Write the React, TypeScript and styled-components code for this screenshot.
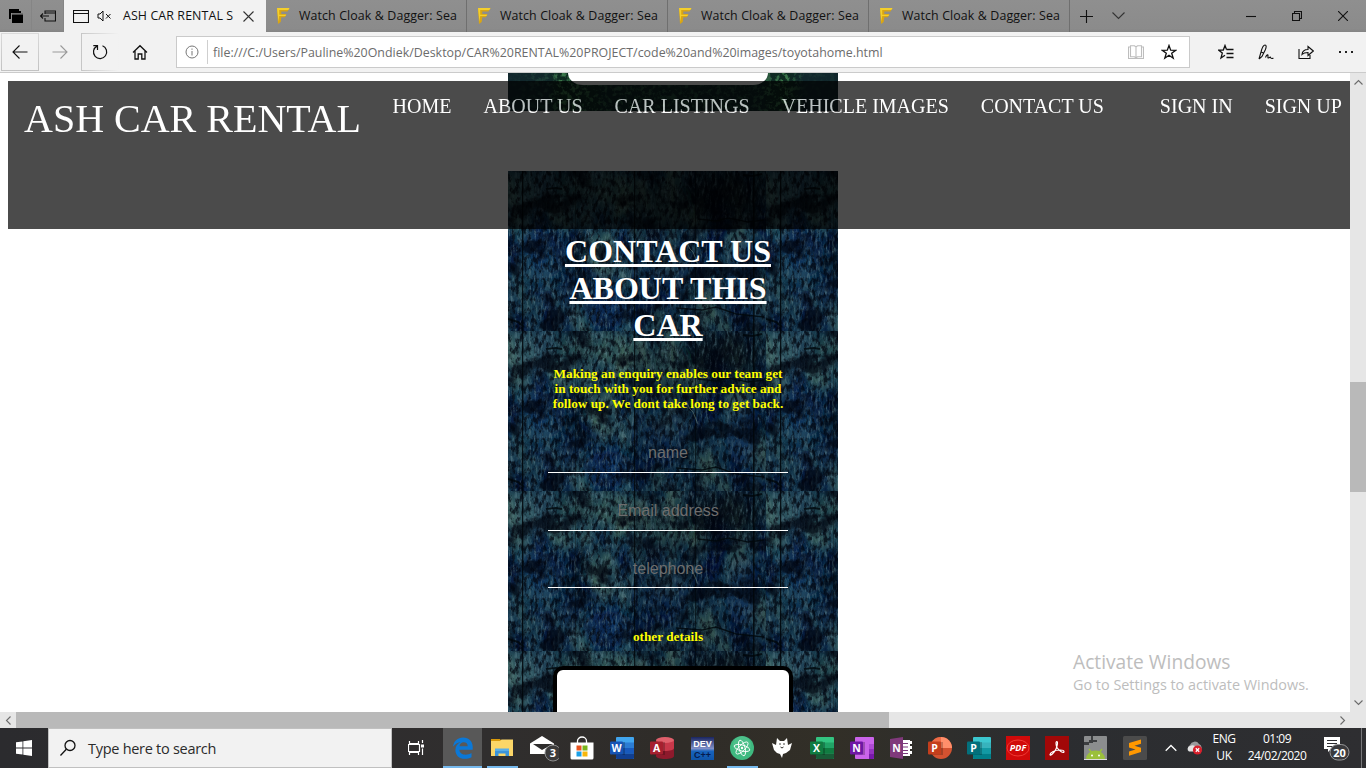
import React from 'react';
import styled, { createGlobalStyle } from 'styled-components';

const GlobalStyle = createGlobalStyle`
  * { box-sizing: border-box; }
  body { margin: 0; background: #fff; overflow: hidden; }
  #root { height: 100vh; }
`;

const uiFont = `"Open Sans", "Noto Sans", sans-serif`;
const serif = `"Liberation Serif", "Times New Roman", serif`;

const Screen = styled.div`
  display: flex;
  flex-direction: column;
  width: 1366px;
  height: 768px;
  overflow: hidden;
  background: #fff;
  font-family: ${uiFont};
`;

/* ---------- browser frame ---------- */

const TabStrip = styled.div`
  display: flex;
  height: 32px;
  flex: none;
  background: linear-gradient(#8f8f8f, #8b8b8b 90%, #848484);
`;

const TabTools = styled.div`
  display: flex;
  width: 64px;
`;

const TabTool = styled.div`
  display: flex;
  align-items: center;
  justify-content: center;
  width: 32px;
  border-right: 1px solid #858585;
`;

const Tab = styled.div<{ $active?: boolean }>`
  display: flex;
  align-items: center;
  width: ${p => (p.$active ? 202 : 201)}px;
  padding-left: ${p => (p.$active ? 9 : 11)}px;
  background: ${p => (p.$active ? '#f2f2f2' : 'transparent')};
  border-right: ${p => (p.$active ? 'none' : '1px solid #6f6f6f')};
`;

const TabSound = styled.div`
  display: flex;
  margin-left: 8px;
`;

const TabTitle = styled.span<{ $left: number }>`
  margin-left: ${p => p.$left}px;
  font-size: 12.4px;
  line-height: 16px;
  letter-spacing: 0.11px;
  color: #111;
  white-space: nowrap;
`;

const TabClose = styled.div`
  display: flex;
  margin-left: auto;
  padding-right: 12px;
`;

const TabActions = styled.div`
  display: flex;
  align-items: center;
  gap: 19px;
  padding-left: 10px;
`;

const WindowControls = styled.div`
  display: flex;
  align-items: center;
  margin-left: auto;
`;

const WindowControl = styled.div`
  display: flex;
  justify-content: center;
  width: 46px;
`;

const Toolbar = styled.div`
  display: flex;
  align-items: center;
  height: 41px;
  flex: none;
  background: #f2f2f2;
  border-bottom: 1px solid #cbcbcb;
`;

const ToolButton = styled.div<{ $frame?: 'full' | 'fade' }>`
  display: flex;
  align-items: center;
  justify-content: center;
  width: 38px;
  height: 38px;
  margin: 0 1px;
  border: 1px solid transparent;
  border-image: ${p =>
    p.$frame === 'full'
      ? 'linear-gradient(#dadada, #c2c2c2) 1'
      : p.$frame === 'fade'
        ? 'linear-gradient(90deg, #c6c6c6, #f2f2f2) 1'
        : 'none'};
`;

const AddressBar = styled.div`
  display: flex;
  align-items: center;
  width: 1014px;
  height: 32px;
  margin-left: 16px;
  padding: 0 12px 0 8px;
  background: #fff;
  border: 1px solid #cacaca;
`;

const AddressDivider = styled.div`
  width: 1px;
  height: 24px;
  margin: 0 5px 0 8px;
  background: #cfcfcf;
`;

const Address = styled.span`
  flex: 1;
  font-size: 12.4px;
  letter-spacing: 0.01px;
  color: #6c6c6c;
  white-space: nowrap;
`;

const AddressIcons = styled.div`
  display: flex;
  align-items: center;
  gap: 17px;
`;

const ToolbarActions = styled.div`
  display: flex;
  align-items: center;
  margin-left: 16px;
`;

const ToolbarAction = styled.div`
  display: flex;
  justify-content: center;
  width: 40px;
`;

/* ---------- page viewport ---------- */

const Viewport = styled.div`
  display: flex;
  height: 639px;
  flex: none;
`;

const Page = styled.div`
  position: relative;
  width: 1350px;
  height: 639px;
  overflow: hidden;
  background: #fff;
`;

const NavBar = styled.nav`
  position: absolute;
  z-index: 2;
  top: 8px;
  left: 8px;
  display: flex;
  align-items: flex-start;
  width: 1352px;
  height: 148px;
  padding-top: 13px;
  background: #000;
  opacity: 0.7;
  font-family: ${serif};
`;

const Brand = styled.a`
  width: 368.6px;
  padding-left: 16px;
  font-size: 40px;
  line-height: 49px;
  color: #fff;
  white-space: nowrap;
`;

const NavLink = styled.a<{ $push?: number }>`
  margin-left: ${p => p.$push ?? 0}px;
  padding: 0 16px;
  font-size: 20px;
  line-height: 25px;
  color: #fff;
  white-space: nowrap;
`;

const Column = styled.main`
  display: flex;
  flex-direction: column;
  gap: 60px;
  width: 330px;
  margin-left: 508px;
`;

const Backdrop = styled.svg`
  display: block;
  grid-area: 1 / 1;
`;

const PreviousPanel = styled.section`
  display: grid;
  height: 38px;
  overflow: hidden;
`;

const PreviousCard = styled.div`
  grid-area: 1 / 1;
  z-index: 1;
  width: 200px;
  height: 12px;
  margin-left: 60px;
  background: #fff;
  border-radius: 0 0 15px 15px / 0 0 12px 12px;
`;

const ContactPanel = styled.section`
  display: grid;
  height: 541px;
  overflow: hidden;
`;

const ContactForm = styled.form`
  grid-area: 1 / 1;
  z-index: 1;
  display: flex;
  flex-direction: column;
  width: 240px;
  margin: 62px 0 0 40px;
  text-align: center;
  font-family: ${serif};
`;

const Heading = styled.h1`
  margin: 0 0 22px;
  font-size: 32px;
  line-height: 37px;
  font-weight: bold;
  color: #fff;
  text-decoration: underline;
  text-decoration-thickness: 3px;
`;

const Note = styled.h5<{ $gap: number }>`
  margin: 0 0 ${p => p.$gap}px;
  font-size: 13.28px;
  line-height: 15px;
  font-weight: bold;
  color: #ff0;
`;

const Fields = styled.div`
  display: flex;
  flex-direction: column;
  gap: 17.6px;
  margin-bottom: 41px;
`;

const Field = styled.input`
  width: 240px;
  height: 40px;
  padding: 1px 0 0;
  border: 0;
  border-bottom: 1px solid #fff;
  outline: 0;
  background: transparent;
  font: 16px "Liberation Sans", Arial, sans-serif;
  text-align: center;
  &:last-child { padding-top: 2px; }
  &::placeholder { color: #6d6d6d; opacity: 1; }
`;

const Details = styled.textarea`
  flex: none;
  width: 240px;
  height: 120px;
  margin-left: 5px;
  border: 4px solid #000;
  border-radius: 10px;
  background: #fff;
  resize: none;
`;

const Watermark = styled.div`
  position: absolute;
  z-index: 3;
  left: 1073px;
  top: 575px;
  color: #bdbdbd;
  white-space: nowrap;
`;

const WatermarkTitle = styled.div`
  font-size: 19.2px;
  line-height: 28px;
`;

const WatermarkText = styled.div`
  font-size: 14.4px;
  line-height: 18px;
`;

const VerticalBar = styled.div`
  display: flex;
  flex-direction: column;
  align-items: center;
  justify-content: space-between;
  width: 16px;
  padding: 5px 0;
  background: linear-gradient(#e6e6e6 309px, #b9b9b9 309px, #b9b9b9 419px, #e6e6e6 419px);
`;

const HorizontalBar = styled.div`
  display: flex;
  align-items: center;
  height: 16px;
  flex: none;
  background: #e6e6e6;
`;

const BarEnd = styled.div`
  display: flex;
  justify-content: center;
  width: 16px;
`;

const HorizontalThumb = styled.div`
  width: 873px;
  height: 16px;
  margin-right: 445px;
  background: #b9b9b9;
`;

/* ---------- task bar ---------- */

const TaskBar = styled.footer`
  display: flex;
  height: 40px;
  flex: none;
  background: linear-gradient(90deg, #2b2b2e, #302e2e 36%, #2f2c28 50%, #322f27 61%, #2b2d30 76%, #2e2e31);
`;

const StartButton = styled.div`
  display: flex;
  align-items: center;
  justify-content: center;
  width: 48px;
`;

const SearchBox = styled.div`
  display: flex;
  align-items: center;
  width: 344px;
  padding-left: 10px;
  background: #f2f2f2;
  border: 1px solid #c0c0c0;
`;

const SearchText = styled.span`
  margin-left: 11px;
  font-size: 14.5px;
  letter-spacing: -0.28px;
  color: #2b2b2b;
`;

const TaskView = styled.div`
  display: flex;
  align-items: center;
  justify-content: center;
  width: 50px;
  padding-right: 2px;
`;

const Task = styled.div<{ $width: number; $state?: 'active' | 'open' }>`
  display: flex;
  align-items: center;
  justify-content: center;
  width: ${p => p.$width}px;
  height: 40px;
  background-color: ${p => (p.$state === 'active' ? '#585858' : 'transparent')};
  background-image: ${p => (p.$state ? 'linear-gradient(#76b9ed, #76b9ed)' : 'none')};
  background-repeat: no-repeat;
  background-position: bottom center;
  background-size: ${p => (p.$state === 'active' ? '100%' : '31px')} 2px;
  border-left: ${p => (p.$state === 'active' ? '1px solid #2f2e2e' : 'none')};
`;

const Tray = styled.div`
  display: flex;
  align-items: center;
  margin-left: 10px;
`;

const TrayIcon = styled.div<{ $width: number }>`
  display: flex;
  justify-content: center;
  width: ${p => p.$width}px;
`;

const TrayText = styled.div<{ $width: number; $spacing: number }>`
  width: ${p => p.$width}px;
  font-size: 12px;
  line-height: 17px;
  letter-spacing: ${p => p.$spacing}px;
  color: #fff;
  text-align: center;
  white-space: nowrap;
  padding-bottom: 2px;
`;

const ShowDesktop = styled.div`
  width: 5px;
  height: 40px;
  margin-left: auto;
  border-left: 1px solid #77777a;
`;

/* ---------- artwork ---------- */

const TILE_W = 258;
const TILE_H = 160;

const WoodBackdrop = () => (
  <Backdrop width="330" height="541">
    <defs>
      <filter id="hue" x="0" y="0" width="100%" height="100%" colorInterpolationFilters="sRGB">
        <feTurbulence type="fractalNoise" baseFrequency="0.045 0.018" numOctaves="6" seed="27" />
        <feColorMatrix values="1 0 0 0 0  1 0 0 0 0  0.75 0.25 0 0 0  0 0 0 0 1" />
        <feComponentTransfer>
          <feFuncR type="table" tableValues="0 0 0.01 0.02 0.06 0.12 0.19 0.26 0.3 0.3" />
          <feFuncG type="table" tableValues="0 0.02 0.06 0.11 0.19 0.26 0.33 0.39 0.4 0.4" />
          <feFuncB type="table" tableValues="0 0.04 0.12 0.2 0.28 0.33 0.36 0.38 0.4 0.4" />
        </feComponentTransfer>
      </filter>
      <filter id="grain" x="0" y="0" width="100%" height="100%" colorInterpolationFilters="sRGB">
        <feTurbulence type="fractalNoise" baseFrequency="0.42 0.12" numOctaves="4" seed="4" />
        <feColorMatrix values="0 0 0 0 0.36  0 0 0 0 0.5  0 0 0 0 0.54  3 0 0 0 -1.45" />
      </filter>
      <filter id="pits" x="0" y="0" width="100%" height="100%" colorInterpolationFilters="sRGB">
        <feTurbulence type="fractalNoise" baseFrequency="0.26 0.13" numOctaves="5" seed="57" />
        <feColorMatrix values="0 0 0 0 0  0 0 0 0 0.01  0 0 0 0 0.05  0 4 0 0 -1.8" />
      </filter>
      <filter id="cracks" x="0" y="0" width="100%" height="100%" colorInterpolationFilters="sRGB">
        <feTurbulence type="fractalNoise" baseFrequency="0.035 0.045" numOctaves="7" seed="140" />
        <feColorMatrix values="0 0 0 0 0  0 0 0 0 0.01  0 0 0 0 0.05  0 6 0 0 -3.2" />
      </filter>
      <filter id="blotch" x="-50%" y="-50%" width="200%" height="200%">
        <feGaussianBlur stdDeviation="9" />
      </filter>
      <pattern id="wood" width={TILE_W} height={TILE_H} patternUnits="userSpaceOnUse">
        <rect width={TILE_W} height={TILE_H} filter="url(#hue)" />
        <g filter="url(#blotch)">
          <ellipse cx="20" cy="20" rx="26" ry="24" fill="#3a6670" opacity=".6" />
          <ellipse cx="85" cy="22" rx="36" ry="18" fill="#2f5550" opacity=".5" />
          <ellipse cx="150" cy="40" rx="26" ry="30" fill="#27443f" opacity=".35" />
          <ellipse cx="100" cy="138" rx="26" ry="18" fill="#174c78" opacity=".5" />
          <ellipse cx="30" cy="85" rx="28" ry="24" fill="#17486a" opacity=".5" />
          <ellipse cx="65" cy="120" rx="22" ry="26" fill="#02103c" opacity=".5" />
          <ellipse cx="150" cy="105" rx="22" ry="20" fill="#03194a" opacity=".5" />
          <ellipse cx="234" cy="100" rx="16" ry="38" fill="#0c3a70" opacity=".6" />
          <ellipse cx="212" cy="25" rx="40" ry="24" fill="#000609" opacity=".65" />
        </g>
        <rect width={TILE_W} height={TILE_H} filter="url(#grain)" opacity=".6" />
        <rect width={TILE_W} height={TILE_H} filter="url(#pits)" opacity=".75" />
        <rect width={TILE_W} height={TILE_H} filter="url(#cracks)" opacity=".7" />
        <rect x="127" width="131" height={TILE_H} fill="#000a14" opacity=".18" />
        <g fill="#000509">
          <rect x="14" width="1.3" height="160" opacity=".85" />
          <rect x="67" width="1" height="160" opacity=".35" />
          <rect x="126" width="1.2" height="160" opacity=".8" />
          <rect x="187" width="1" height="160" opacity=".55" />
          <rect x="245" width="1.6" height="160" opacity=".8" />
        </g>
        <g fill="none" stroke="#00060a" opacity=".8">
          <path d="M190 48l18 2 12-3 20 4 16-2" strokeWidth="1.4" />
          <path d="M168 137l26 2 14-3 20 7 28 3" strokeWidth="1.4" />
          <path d="M235 4l10 1 9-2M38 18l10-1 6 1M0 148l10 3 6 5" strokeWidth="2" />
        </g>
        <path d="M178 70l4 8 3 3 5 12" stroke="#6e8880" fill="none" opacity=".5" />
      </pattern>
    </defs>
    <rect width="330" height="541" fill="url(#wood)" />
  </Backdrop>
);

const LeafBackdrop = () => (
  <Backdrop width="330" height="38">
    <defs>
      <filter id="leaf" x="0" y="0" width="100%" height="100%" colorInterpolationFilters="sRGB">
        <feTurbulence type="fractalNoise" baseFrequency="0.22" numOctaves="3" seed="9" />
        <feColorMatrix values="0 0 0 0 0.24  0 0 0 0 0.48  0 0 0 0 0.3  5 0 0 0 -2.4" />
      </filter>
      <linearGradient id="leafFade">
        <stop offset="0" stopColor="#fff" stopOpacity=".04" />
        <stop offset=".12" stopColor="#fff" stopOpacity=".3" />
        <stop offset=".16" stopColor="#fff" />
        <stop offset=".3" stopColor="#fff" stopOpacity=".5" />
        <stop offset=".75" stopColor="#fff" stopOpacity=".4" />
        <stop offset=".84" stopColor="#fff" />
        <stop offset=".9" stopColor="#fff" stopOpacity=".1" />
      </linearGradient>
      <mask id="leafMask">
        <rect width="330" height="38" fill="url(#leafFade)" />
      </mask>
    </defs>
    <rect width="330" height="38" fill="#12272e" />
    <g mask="url(#leafMask)">
      <rect width="330" height="38" fill="#0e2a20" />
      <rect width="330" height="38" filter="url(#leaf)" />
    </g>
  </Backdrop>
);

const Chevron = ({ d, color = '#6b6b6b' }: { d: string; color?: string }) => (
  <svg width="9" height="9" viewBox="0 0 9 9" fill="none" stroke={color} strokeWidth="1.1">
    <path d={d} />
  </svg>
);

const Favicon = () => (
  <svg width="13" height="16" viewBox="0 0 13 16">
    <path d="M0 0h12.500l-2 3.600H4.300V6h5.200L7.800 9.200H4.300l-.6 4.800L1 16z" fill="#d9a514" />
    <path d="M0 0h12.500l-1.100 2H2.200v4.800h7L8.500 8H2.200L1.500 14z" fill="#f4cf2c" />
  </svg>
);

const Line = ({ w = 16, h = 16, color = '#111', width = 1.1, children }: {
  w?: number; h?: number; color?: string; width?: number; children: React.ReactNode;
}) => (
  <svg width={w} height={h} viewBox={`0 0 ${w} ${h}`} fill="none" stroke={color} strokeWidth={width}>
    {children}
  </svg>
);

const IconLetter = styled.text<{ $size?: number; $fill?: string; $italic?: boolean; $plain?: boolean }>`
  font-family: ${p => (p.$plain ? '"Liberation Sans", Arial, sans-serif' : '"Open Sans", sans-serif')};
  font-weight: 700;
  font-style: ${p => (p.$italic ? 'italic' : 'normal')};
  font-size: ${p => p.$size ?? 10.5}px;
  fill: ${p => p.$fill ?? '#fff'};
  text-anchor: middle;
`;

const OfficeIcon = ({ letter, tones, badge, shape }: {
  letter: string; tones: string[]; badge: string; shape?: 'disc' | 'drum' | 'book';
}) => (
  <svg width="24" height="24" viewBox="0 0 24 24">
    {shape === 'disc' ? (
      <>
        <circle cx="13" cy="12" r="11" fill={tones[2]} />
        <path d="M13 1a11 11 0 0 1 11 11H13z" fill={tones[0]} />
        <path d="M13 1a11 11 0 0 0-11 11h11z" fill={tones[1]} />
      </>
    ) : shape === 'drum' ? (
      <>
        <path d="M6 4v16c0 1.800 4 3 9 3s9-1.200 9-3V4z" fill={tones[2]} />
        <path d="M6 4v8c0 1.800 4 3 9 3s9-1.200 9-3V4z" fill={tones[1]} />
        <ellipse cx="15" cy="4" rx="9" ry="3" fill={tones[0]} />
      </>
    ) : shape === 'book' ? (
      <>
        <rect x="5" y="1" width="19" height="22" rx="1" fill={tones[0]} />
        <path d="M19 8h5v5h-5z" fill={tones[1]} />
        <path d="M19 13h5v5h-5z" fill={tones[2]} />
        <path d="M19 18h5v4a1 1 0 0 1-1 1h-4z" fill={tones[3]} />
      </>
    ) : (
      <>
        <rect x="6" y="1" width="18" height="22" rx="1" fill={tones[0]} />
        <rect x="6" y="6.500" width="18" height="5.500" fill={tones[1]} />
        <rect x="6" y="12" width="18" height="5.500" fill={tones[2]} />
        <path d="M6 17.500h18V22a1 1 0 0 1-1 1H7a1 1 0 0 1-1-1z" fill={tones[3]} />
      </>
    )}
    <rect x="2" y="6" width="13" height="13" fill="#000" opacity=".22" />
    <rect x="0" y="5.500" width="13" height="13" rx="1" fill={badge} />
    <IconLetter x="6.500" y="15.800">{letter}</IconLetter>
  </svg>
);

const EdgeIcon = () => (
  <svg width="22" height="22" viewBox="0 0 22 22">
    <path d="M1 9.700C1.800 4 5.700.5 11 .5c6 0 9.700 4 9.700 9.600v2.700H7.400c.2 3.500 3 4.900 6.200 4.900 2.200 0 4.200-.6 5.900-1.700v4.200c-1.900 1.100-4.300 1.600-6.700 1.600-5.700 0-9.400-3.500-9.400-8.800 0-3.600 2-6.500 5.200-8C5.200 5.800 2.700 7.500 1 9.700zM7.500 9.300h8.200c0-2.600-1.400-4.100-3.900-4.100-2.300 0-3.900 1.500-4.300 4.100z" fill="#0b78d7" />
  </svg>
);

const ExplorerIcon = () => (
  <svg width="22" height="20" viewBox="0 0 22 20">
    <path d="M0 1h9l1.500 2H0z" fill="#d99a0b" />
    <path d="M0 3h9l1.500-1.500H22V18H0z" fill="#fbd668" />
    <path d="M4 18v-6h14v6h-3.500v-2.500h-7V18z" fill="#3c94da" />
    <path d="M4 10.500h14V13H4z" fill="#59aee8" />
  </svg>
);

const MailIcon = () => (
  <svg width="34" height="28" viewBox="0 0 34 28">
    <path d="M5 9.500L17 2l12 7.500v9L25 20H5z" fill="#fff" />
    <path d="M8 10h20l-11 6z" fill="#2e2c2c" />
    <circle cx="28" cy="19" r="8" fill="#3c3b3b" stroke="#8c8c8c" />
    <IconLetter x="28" y="23" $size={11}>3</IconLetter>
  </svg>
);

const StoreIcon = () => (
  <svg width="24" height="25" viewBox="0 0 24 25">
    <path d="M7.500 7V5a4.500 4 0 0 1 9 0v2" fill="none" stroke="#fff" strokeWidth="1.300" />
    <path d="M.5 6.500h23V22a1.500 1.500 0 0 1-1.500 1.500H2A1.500 1.500 0 0 1 .5 22z" fill="#fff" />
    <path d="M6.500 9.500H11.500v5h-5z" fill="#e8531f" />
    <path d="M12.500 9.500H17.500v5h-5z" fill="#7ab51d" />
    <path d="M6.500 15.500H11.500v5h-5z" fill="#1a9fe6" />
    <path d="M12.500 15.500H17.500v5h-5z" fill="#f8b70c" />
  </svg>
);

const DevIcon = () => (
  <svg width="23" height="23" viewBox="0 0 23 23">
    <defs>
      <linearGradient id="dev" x2="0" y2="1">
        <stop stopColor="#1a2560" />
        <stop offset=".5" stopColor="#7f8fc8" />
        <stop offset=".62" stopColor="#1763bd" />
        <stop offset="1" stopColor="#0f54a8" />
      </linearGradient>
    </defs>
    <rect width="23" height="23" fill="url(#dev)" />
    <IconLetter x="11.500" y="9.500" $size={9} $plain>DEV</IconLetter>
    <IconLetter x="11.500" y="21" $size={9} $fill="#061a4c" $plain>C++</IconLetter>
  </svg>
);

const AtomIcon = () => (
  <svg width="24" height="24" viewBox="0 0 24 24">
    <circle cx="12" cy="12" r="12" fill="#3fb980" />
    <circle cx="12" cy="9" r="9" fill="#66cf9f" opacity=".35" />
    <g fill="none" stroke="#fff" strokeWidth=".9">
      <ellipse cx="12" cy="12" rx="8" ry="3" transform="rotate(15 12 12)" />
      <ellipse cx="12" cy="12" rx="8" ry="3" transform="rotate(75 12 12)" />
      <ellipse cx="12" cy="12" rx="8" ry="3" transform="rotate(135 12 12)" />
    </g>
    <circle cx="12" cy="12" r="1.200" fill="#fff" />
  </svg>
);

const FoxIcon = () => (
  <svg width="20" height="20" viewBox="0 0 20 20">
    <path d="M5 0l3 3h4l3-3 1 7 4-2-2 7-4 3-3 1-1 4-2-4-3-1-3-3-2-7 4 2z" fill="#fff" />
    <circle cx="8" cy="6" r=".8" fill="#2e2c28" />
    <circle cx="12" cy="6" r=".8" fill="#2e2c28" />
    <path d="M8.500 9l1.500 1 1.500-1" stroke="#2e2c28" fill="none" />
  </svg>
);

const OldNoteIcon = () => (
  <svg width="22" height="22" viewBox="0 0 22 22">
    <path d="M12 3h8v16h-8z" fill="#fff" />
    <path d="M19 4h3v3h-3zM19 9h3v3h-3zM19 14h3v3h-3z" fill="#fff" />
    <path d="M13 6.500h5M13 10h5M13 13.500h5M13 16.500h5" stroke="#7d3a7c" />
    <path d="M0 2l13-2v22L0 20z" fill="#80397b" />
    <IconLetter x="6.500" y="14.800">N</IconLetter>
  </svg>
);

const PdfIcon = () => (
  <svg width="24" height="24" viewBox="0 0 24 24">
    <rect width="24" height="24" fill="#d00a0a" />
    <ellipse cx="12" cy="12" rx="11" ry="8" fill="none" stroke="#ef3a34" />
    <IconLetter x="12" y="15.200" $size={9} $italic>PDF</IconLetter>
  </svg>
);

const AcrobatIcon = () => (
  <svg width="24" height="24" viewBox="0 0 24 24">
    <rect width="24" height="24" fill="#a20808" />
    <path d="M5 18.500c0-2 5-4.500 10-4.500 3 0 4 1 4 1.700 0 2-5-.4-7-4.200-1.200-2.500-1.300-6-.2-6s.9 3.500-.8 7.500c-1.800 4-6 7.500-6 5.500z" fill="none" stroke="#fff" strokeWidth="1.200" />
  </svg>
);

const AndroidIcon = () => (
  <svg width="23" height="24" viewBox="0 0 23 24">
    <rect width="23" height="24" rx="1" fill="#8b8d8e" />
    <path d="M0 6h5v3H0zM7 0h2v4H7zM5 4h4v3H5zM9 4h4v2H9z" fill="#3c3e40" />
    <path d="M2 23a9.500 8.500 0 0 1 19 0z" fill="#9bc03b" />
    <path d="M5 13l3 4M18 13l-3 4" stroke="#9bc03b" strokeWidth="1.400" />
    <path d="M0 23h23v1H0z" fill="#ddd" />
    <circle cx="8" cy="19.500" r="1" fill="#fff" />
    <circle cx="15" cy="19.500" r="1" fill="#fff" />
  </svg>
);

const SublimeIcon = () => (
  <svg width="24" height="24" viewBox="0 0 24 24">
    <rect width="24" height="24" rx="1.500" fill="#4b4b4b" />
    <path d="M6 7l12-3.500v4.300l-6.500 2 6.500 2V16L6 19.700v-4.200l6.500-2-6.500-2z" fill="#ff9800" />
  </svg>
);

const tabs = [1, 2, 3, 4];
const links: { label: string; push?: number }[] = [
  { label: 'HOME' },
  { label: 'ABOUT US' },
  { label: 'CAR LISTINGS' },
  { label: 'VEHICLE IMAGES' },
  { label: 'CONTACT US' },
  { label: 'SIGN IN', push: 24 },
  { label: 'SIGN UP' },
];

const tasks: { icon: React.ReactNode; state?: 'active' | 'open' }[] = [
  { icon: <EdgeIcon />, state: 'active' },
  { icon: <ExplorerIcon />, state: 'open' },
  { icon: <MailIcon /> },
  { icon: <StoreIcon /> },
  { icon: <OfficeIcon letter="W" badge="#1654b4" tones={['#41a5ee', '#2b7cd3', '#185abd', '#103f91']} /> },
  { icon: <OfficeIcon letter="A" badge="#a6202f" shape="drum" tones={['#e0606c', '#c8384a', '#8e1a2c']} /> },
  { icon: <DevIcon /> },
  { icon: <AtomIcon />, state: 'open' },
  { icon: <FoxIcon /> },
  { icon: <OfficeIcon letter="X" badge="#107c41" tones={['#33c481', '#21a366', '#107c41', '#185c37']} /> },
  { icon: <OfficeIcon letter="N" badge="#6f17a5" shape="book" tones={['#ca64ea', '#ae4bd5', '#9332bf', '#7719aa']} /> },
  { icon: <OldNoteIcon /> },
  { icon: <OfficeIcon letter="P" badge="#c43e1c" shape="disc" tones={['#ff8f6b', '#ed6c47', '#d35230']} /> },
  { icon: <OfficeIcon letter="P" badge="#03707c" tones={['#3cc7cf', '#37b3bd', '#129aa4', '#027f89']} /> },
  { icon: <PdfIcon /> },
  { icon: <AcrobatIcon /> },
  { icon: <AndroidIcon /> },
  { icon: <SublimeIcon /> },
];

export default function App() {
  return (
    <>
      <GlobalStyle />
      <Screen>
        <TabStrip>
          <TabTools>
            <TabTool>
              <svg width="14" height="14" viewBox="0 0 14 14">
                <path d="M0 0h10v2h2v2H2v6H0z" fill="#000" />
                <path d="M3 4.800h11V14H3z" fill="#000" />
                <path d="M3 5.300h11" stroke="#777" strokeWidth=".8" />
              </svg>
            </TabTool>
            <TabTool>
              <Line w={16} h={12}>
                <path d="M5 4V1h10.500v10H5V8M5 3h10.500M.5 6H9M3 3.500L.5 6 3 8.500" />
              </Line>
            </TabTool>
          </TabTools>
          <Tab $active>
            <Line w={16} h={13}><path d="M.5.500h15v12H.5zM.5 3.500h15" /></Line>
            <TabSound>
              <Line w={15} h={12} width={1}>
                <path d="M1 4v4h2l3 3V1L3 4zM9 4l4.500 4.500M13.500 4L9 8.500" />
              </Line>
            </TabSound>
            <TabTitle $left={11}>ASH CAR RENTAL S</TabTitle>
            <TabClose>
              <Line w={11} h={11} color="#333"><path d="M.5.500l10 10M10.500.500l-10 10" /></Line>
            </TabClose>
          </Tab>
          {tabs.map(n => (
            <Tab key={n}>
              <Favicon />
              <TabTitle $left={9}>{'Watch Cloak & Dagger: Sea'}</TabTitle>
            </Tab>
          ))}
          <TabActions>
            <Line w={13} h={13}><path d="M6.500 0v13M0 6.500h13" /></Line>
            <Line w={13} h={8} color="#333"><path d="M.5.500l6 6 6-6" /></Line>
          </TabActions>
          <WindowControls>
            <WindowControl><Line w={10} h={10}><path d="M0 5.500h10" /></Line></WindowControl>
            <WindowControl><Line w={10} h={10}><path d="M.5 2.500h7v7h-7zM2.500 2.500v-2h7v7h-2" /></Line></WindowControl>
            <WindowControl><Line w={10} h={10}><path d="M0 0l10 10M10 0L0 10" /></Line></WindowControl>
          </WindowControls>
        </TabStrip>

        <Toolbar>
          <ToolButton $frame="full"><Line><path d="M15.500 8H1M7.500 1.500L1 8l6.500 6.500" /></Line></ToolButton>
          <ToolButton><Line color="#999"><path d="M.5 8H15M8.500 1.500L15 8l-6.500 6.500" /></Line></ToolButton>
          <ToolButton $frame="fade">
            <Line width={1.2}><path d="M10.500 1.800A6.600 6.600 0 1 1 5 2.100M5.500 6V1.700H1.300" /></Line>
          </ToolButton>
          <ToolButton>
            <Line width={1.3}><path d="M1 8.500L8 1.700l7 6.800M3 7v8h3.200v-5h3.600v5H13V7" /></Line>
          </ToolButton>
          <AddressBar>
            <Line w={14} h={14} color="#777" width={1}>
              <circle cx="7" cy="7" r="6" /><path d="M7 6v4.500M7 3.500v1.300" />
            </Line>
            <AddressDivider />
            <Address>file:///C:/Users/Pauline%20Ondiek/Desktop/CAR%20RENTAL%20PROJECT/code%20and%20images/toyotahome.html</Address>
            <AddressIcons>
              <Line w={16} h={15} color="#bdbdbd">
                <path d="M2.500.800h4L8 2l1.500-1.200h4v11h-4L8 13l-1.500-1.200h-4zM8 2v11M2.500 2h-2v11.500h15V2h-2" />
              </Line>
              <Line width={1.3}>
                <path d="M8 1.500l1.700 4.700 5 .1-4 3 1.500 4.900L8 11.300l-4.200 2.900 1.500-4.900-4-3 5-.1z" />
              </Line>
            </AddressIcons>
          </AddressBar>
          <ToolbarActions>
            <ToolbarAction>
              <Line>
                <path d="M8.500 5.500L7 1.500 5.300 6l-4.800.1 3.800 3L3 14l4-2.800M8.500 5.500h7M8.500 9.500h7M8.500 13.500h7" strokeWidth="1.300" />
              </Line>
            </ToolbarAction>
            <ToolbarAction>
              <Line>
                <path d="M1 15l2-7C4 4 5.500 1 7 1s1.500 2 .2 5L4 12.500 1 15M3 8l2.500 1M7.500 13.500c1-2.500 2.500-3.500 2.500-2s-.5 3 .8 2.300 1.700-1 2 0 .9.700 2.700.5" />
              </Line>
            </ToolbarAction>
            <ToolbarAction>
              <Line>
                <path d="M1 5v9.500h11V11M4 10.500c.3-3.500 2.500-5 6-5V2.500L15.300 7 10 11.500V8.500c-2.500 0-4.500.3-6 2z" />
              </Line>
            </ToolbarAction>
            <ToolbarAction>
              <svg width="14" height="2"><path d="M0 0h2v2H0zM6 0h2v2H6zM12 0h2v2h-2z" fill="#222" /></svg>
            </ToolbarAction>
          </ToolbarActions>
        </Toolbar>

        <Viewport>
          <Page>
            <NavBar>
              <Brand>ASH CAR RENTAL</Brand>
              {links.map(l => <NavLink key={l.label} $push={l.push}>{l.label}</NavLink>)}
            </NavBar>
            <Column>
              <PreviousPanel>
                <LeafBackdrop />
                <PreviousCard />
              </PreviousPanel>
              <ContactPanel>
                <WoodBackdrop />
                <ContactForm>
                  <Heading>CONTACT US ABOUT THIS CAR</Heading>
                  <Note $gap={22}>Making an enquiry enables our team get in touch with you for further advice and follow up. We dont take long to get back.</Note>
                  <Fields>
                    <Field placeholder="name" />
                    <Field placeholder="Email address" />
                    <Field placeholder="telephone" />
                  </Fields>
                  <Note $gap={22}>other details</Note>
                  <Details />
                </ContactForm>
              </ContactPanel>
            </Column>
            <Watermark>
              <WatermarkTitle>Activate Windows</WatermarkTitle>
              <WatermarkText>Go to Settings to activate Windows.</WatermarkText>
            </Watermark>
          </Page>
          <VerticalBar>
            <Chevron d="M.5 6.500l4-4 4 4" />
            <Chevron d="M.5 2.500l4 4 4-4" />
          </VerticalBar>
        </Viewport>
        <HorizontalBar>
          <BarEnd><Chevron d="M6.500.500l-4 4 4 4" /></BarEnd>
          <HorizontalThumb />
          <BarEnd><Chevron d="M2.500.500l4 4-4 4" /></BarEnd>
        </HorizontalBar>

        <TaskBar>
          <StartButton>
            <svg width="16" height="16" viewBox="0 0 16 16">
              <path d="M0 2.300l6.500-.9v6.200H0zM7.300 1.200L16 0v7.600H7.300zM0 8.400h6.500v6.200L0 13.700zM7.300 8.400H16V16l-8.700-1.200z" fill="#fff" />
            </svg>
          </StartButton>
          <SearchBox>
            <Line w={18} h={18} width={1.3}><circle cx="11" cy="6.500" r="5" /><path d="M7.300 10.300L1.500 16.500" /></Line>
            <SearchText>Type here to search</SearchText>
          </SearchBox>
          <TaskView>
            <Line w={16} h={16} color="#fff" width={1.2}>
              <path d="M1.500 1v2.500h9V1M1.500 15v-2.500h9V15M.5 4.500v7h11v-7zM14.500 0v3M14.500 8.500V15" />
              <path d="M13 4.500h3v3h-3z" fill="#fff" stroke="none" />
            </Line>
          </TaskView>
          {tasks.map((t, i) => (
            <Task key={i} $width={i < 10 ? 40 : 39} $state={t.state}>{t.icon}</Task>
          ))}
          <Tray>
            <TrayIcon $width={14}><Line w={12} h={8} color="#fff" width={1.3}><path d="M.7 6.800L6 1.500l5.300 5.300" /></Line></TrayIcon>
            <TrayIcon $width={32}>
              <svg width="17" height="14" viewBox="0 0 17 14">
                <path d="M4 10a3.500 3.500 0 0 1 0-6 5 5 0 0 1 9-1 4 4 0 0 1 1 7z" fill="#9a9a9c" />
                <path d="M3 10.500a3 3 0 0 1 1-5.500 5 5 0 0 1 5 0v5.500z" fill="#e4e4e4" />
                <circle cx="11.500" cy="9" r="4.600" fill="#d8202c" />
                <path d="M9.800 7.300l3.400 3.400M13.200 7.300l-3.400 3.400" stroke="#fff" strokeWidth="1.300" />
              </svg>
            </TrayIcon>
            <TrayText $width={28} $spacing={-0.4}>ENG<br />UK</TrayText>
            <TrayText $width={78} $spacing={-0.5}>01:09<br />24/02/2020</TrayText>
            <TrayIcon $width={42}>
              <svg width="28" height="26" viewBox="0 0 28 26">
                <path d="M1 2h16v12H8l-3 3v-3H1z" fill="#fff" />
                <path d="M4 5.500h10M4 8.500h10M4 11.500h6" stroke="#2e2e31" />
                <rect x="7" y="9.500" width="19" height="15.500" rx="7.750" fill="#3a3a3d" stroke="#98989a" />
                <IconLetter x="16.500" y="21.500" $size={11}>20</IconLetter>
              </svg>
            </TrayIcon>
          </Tray>
          <ShowDesktop />
        </TaskBar>
      </Screen>
    </>
  );
}
